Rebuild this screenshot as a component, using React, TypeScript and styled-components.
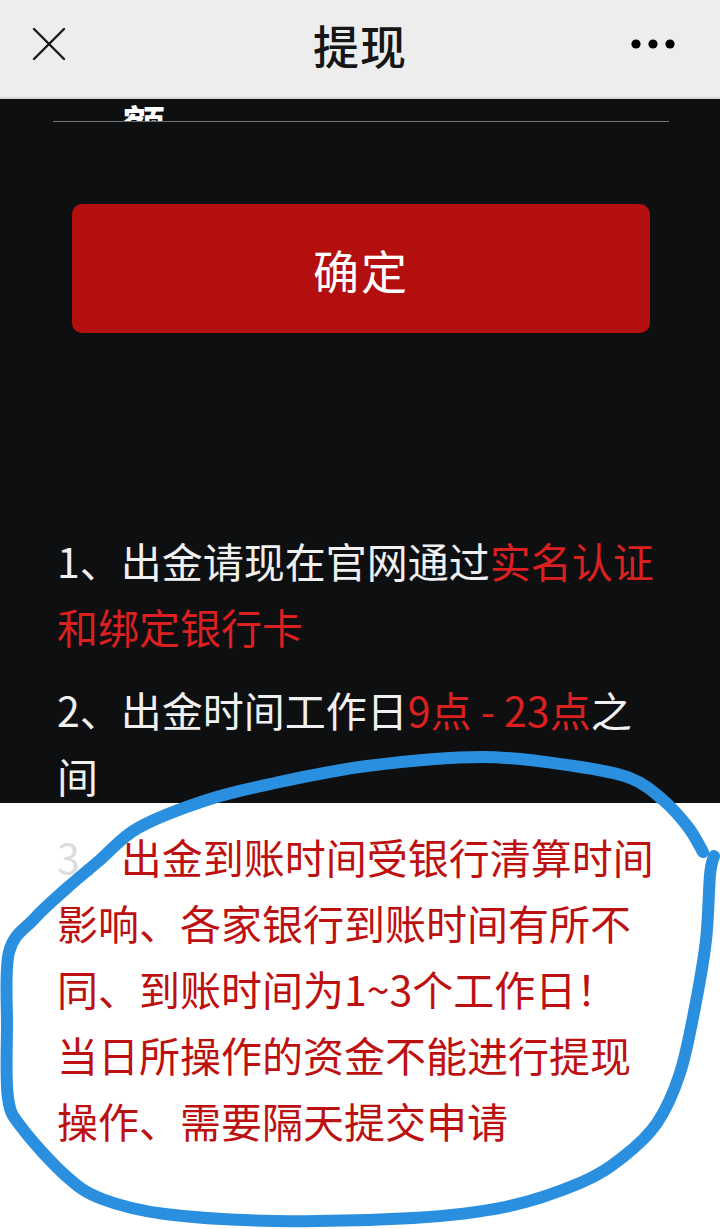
import React from 'react'
import styled, { createGlobalStyle } from 'styled-components'

const GlobalStyle = createGlobalStyle`
  html, body {
    margin: 0;
    padding: 0;
    background: #ffffff;
  }
  body {
    font-family: "Noto Sans CJK SC", "Noto Sans", sans-serif;
  }
`

const Page = styled.div`
  position: relative;
  width: 720px;
  min-height: 1229px;
  overflow: hidden;
  background: #ffffff;
`

// ** Top bar
const TopBar = styled.header`
  display: grid;
  grid-template-columns: 1fr auto 1fr;
  align-items: center;
  height: 99px;
  padding: 0 32px 10px;
  box-sizing: border-box;
  background: #ededed;
  border-bottom: 2px solid #d6d6d6;
`

const Title = styled.h1`
  margin: 0;
  font-size: 46px;
  font-weight: 500;
  line-height: 1;
  color: #161616;
  letter-spacing: 1px;
`

const BarAction = styled.div<{ $align: 'start' | 'end' }>`
  display: flex;
  justify-content: ${p => (p.$align === 'end' ? 'flex-end' : 'flex-start')};
  align-items: center;
  padding-right: ${p => (p.$align === 'end' ? '13px' : '0')};
`

// ** Dark form panel
const Panel = styled.section`
  height: 704px;
  overflow: hidden;
  background: #0e0f11;
`

const AmountRow = styled.div`
  height: 23px;
  margin: 0 51px 0 53px;
  padding: 3px 0 0 70px;
  box-sizing: border-box;
  border-bottom: 1px solid #707070;
  overflow: hidden;
`

const AmountLabel = styled.span`
  display: block;
  font-size: 42px;
  line-height: 1;
  font-weight: 700;
  color: #ffffff;
`

const ConfirmButton = styled.button`
  display: flex;
  align-items: center;
  justify-content: center;
  width: 578px;
  height: 129px;
  margin: 82px 0 0 72px;
  border: none;
  border-radius: 10px;
  background: #b40f0f;
  color: #ffffff;
  font-family: inherit;
  font-size: 46px;
  letter-spacing: 2px;
`

const NoteList = styled.div<{ $top: number }>`
  padding: ${p => p.$top}px 57px 0 57px;
`

const Note = styled.p<{ $tone: 'dark' | 'light' }>`
  margin: 0 0 17px;
  font-size: 41px;
  line-height: 66px;
  color: ${p => (p.$tone === 'dark' ? '#f0f0f0' : '#dcdcdc')};
`

const Mark = styled.span<{ $tone: 'dark' | 'light' }>`
  color: ${p => (p.$tone === 'dark' ? '#dc1f1f' : '#bd1010')};
`

// ** Hand-drawn annotation over the notice
const Annotation = styled.svg`
  position: absolute;
  left: 0;
  top: 0;
  pointer-events: none;
`

const loop: [number, number][] = [
  [714, 856], [710, 875], [706, 940], [695, 1007], [680, 1073], [657, 1123],
  [623, 1157], [580, 1183], [505, 1207], [413, 1218], [275, 1221], [165, 1214],
  [102, 1199], [66, 1176], [22, 1128], [8, 1098], [7, 1027], [9, 952],
  [34, 919], [67, 888], [100, 860], [138, 828], [207, 800], [275, 783],
  [367, 766], [482, 757], [574, 766], [630, 778], [663, 800], [688, 827], [703, 852],
]

const smoothPath = (p: [number, number][]) => {
  let d = `M${p[0][0]} ${p[0][1]}`
  for (let i = 0; i < p.length - 1; i++) {
    const p0 = p[i - 1] || p[i]
    const p1 = p[i]
    const p2 = p[i + 1]
    const p3 = p[i + 2] || p2
    const c1x = p1[0] + (p2[0] - p0[0]) / 6
    const c1y = p1[1] + (p2[1] - p0[1]) / 6
    const c2x = p2[0] - (p3[0] - p1[0]) / 6
    const c2y = p2[1] - (p3[1] - p1[1]) / 6
    d += ` C${c1x.toFixed(1)} ${c1y.toFixed(1)} ${c2x.toFixed(1)} ${c2y.toFixed(1)} ${p2[0]} ${p2[1]}`
  }
  return d
}

const CloseIcon = () => (
  <svg width="34" height="34" viewBox="0 0 34 34">
    <path d="M2 2 L32 32 M32 2 L2 32" stroke="#161616" strokeWidth="2.4" strokeLinecap="round" />
  </svg>
)

const MoreIcon = () => (
  <svg width="44" height="10" viewBox="0 0 44 10">
    <circle cx="5" cy="5" r="4.6" fill="#000" />
    <circle cx="22" cy="5" r="4.6" fill="#000" />
    <circle cx="39" cy="5" r="4.6" fill="#000" />
  </svg>
)

const App = () => {
  return (
    <Page>
      <GlobalStyle />
      <TopBar>
        <BarAction $align="start">
          <CloseIcon />
        </BarAction>
        <Title>提现</Title>
        <BarAction $align="end">
          <MoreIcon />
        </BarAction>
      </TopBar>

      <Panel>
        <AmountRow>
          <AmountLabel>额</AmountLabel>
        </AmountRow>
        <ConfirmButton>确定</ConfirmButton>
        <NoteList $top={194}>
          <Note $tone="dark">
            1、出金请现在官网通过<Mark $tone="dark">实名认证和绑定银行卡</Mark>
          </Note>
          <Note $tone="dark">
            2、出金时间工作日<Mark $tone="dark">9点 - 23点</Mark>之间
          </Note>
        </NoteList>
      </Panel>

      <NoteList $top={20}>
        <Note $tone="light">
          3、<Mark $tone="light">出金到账时间受银行清算时间影响、各家银行到账时间有所不同、到账时间为1~3个工作日！<br />当日所操作的资金不能进行提现操作、需要隔天提交申请</Mark>
        </Note>
      </NoteList>

      <Annotation width="720" height="1229" viewBox="0 0 720 1229">
        <path d={smoothPath(loop)} fill="none" stroke="#2b8fdf" strokeWidth="12" strokeLinecap="round" strokeLinejoin="round" />
      </Annotation>
    </Page>
  )
}

export default App
